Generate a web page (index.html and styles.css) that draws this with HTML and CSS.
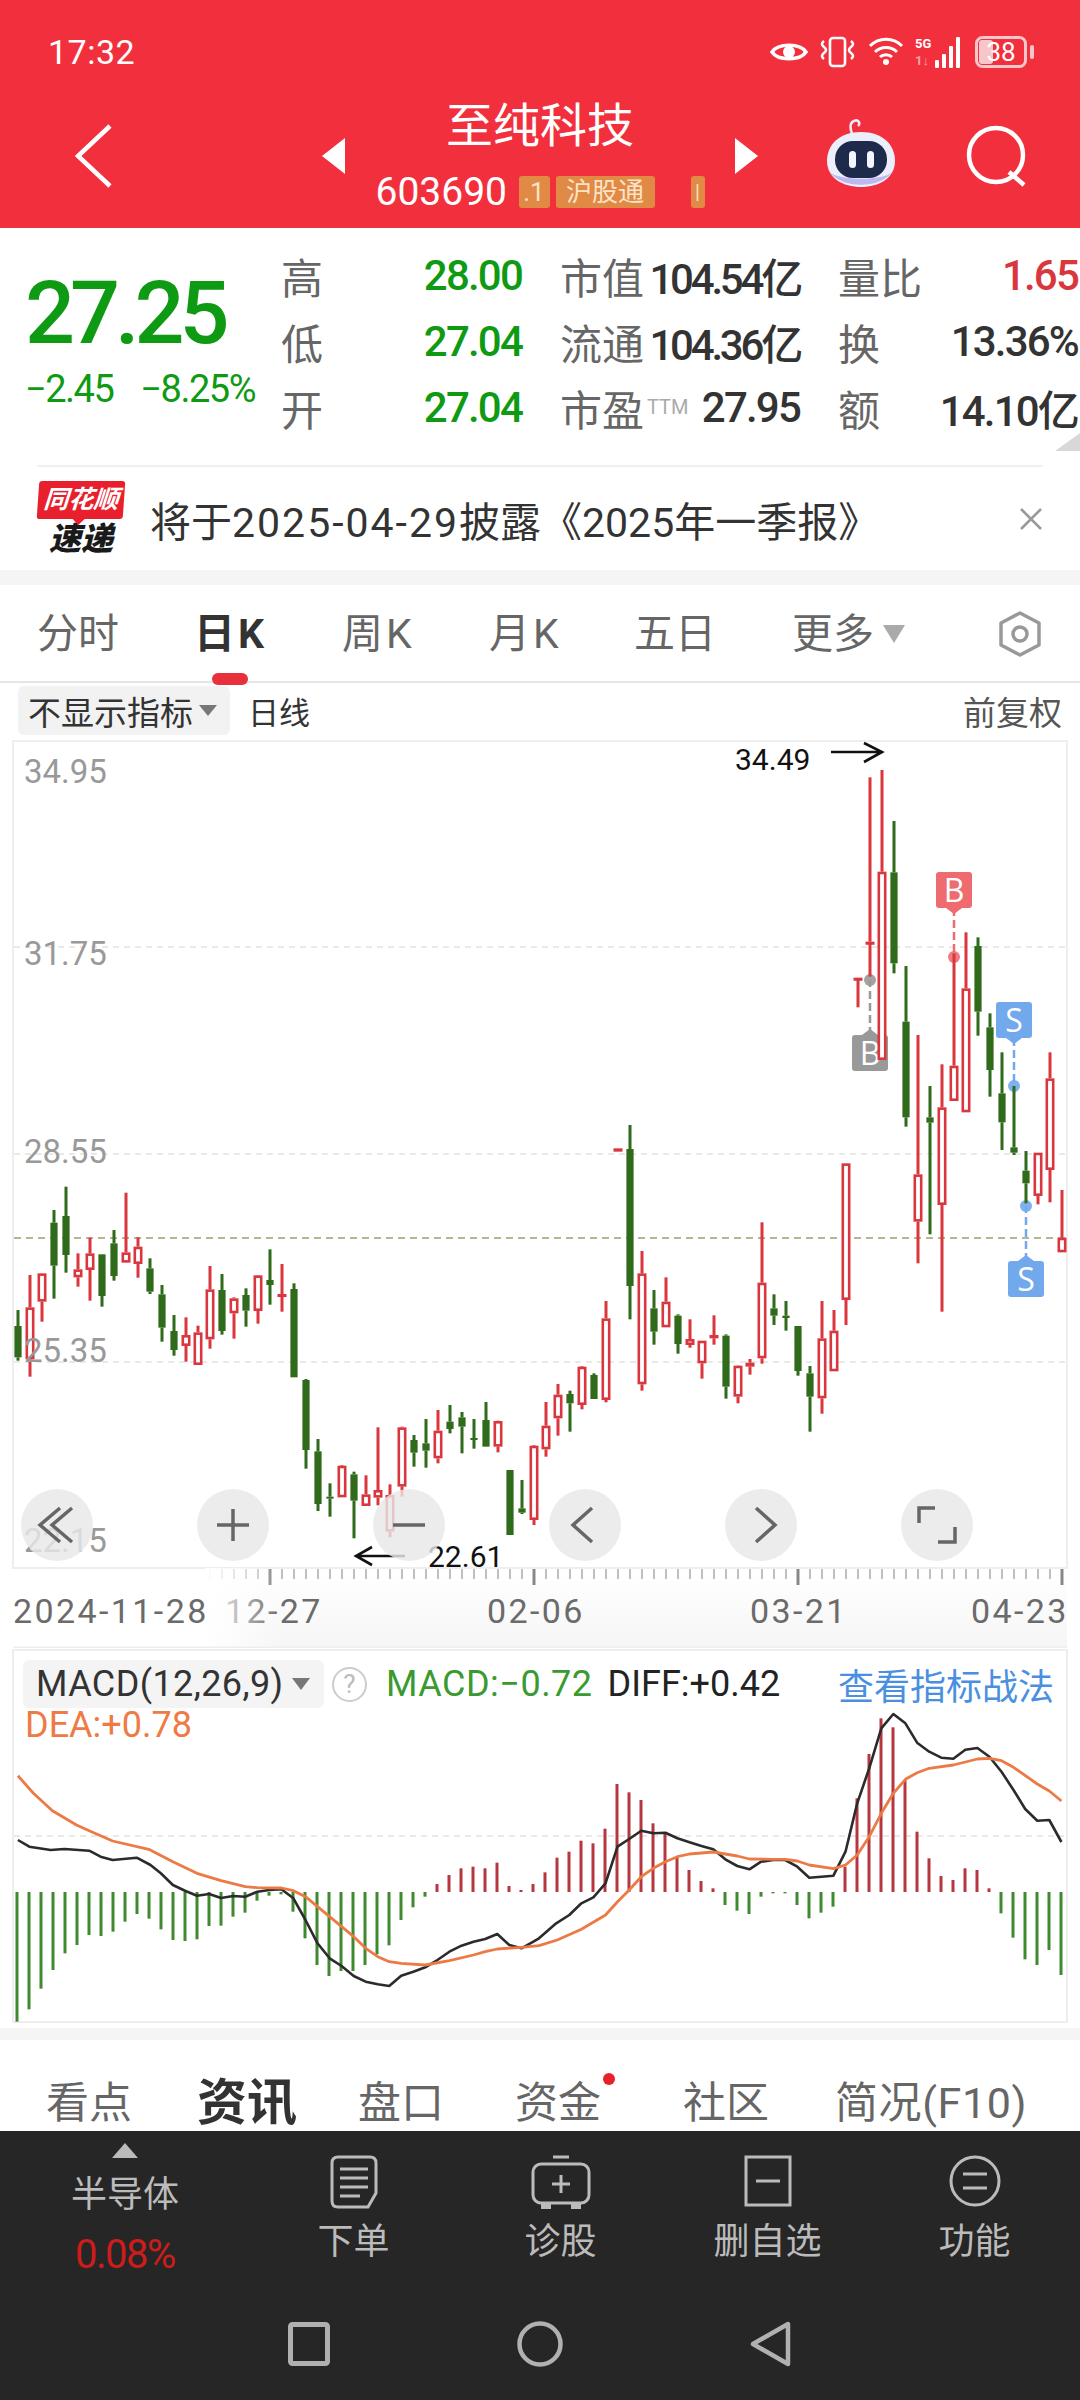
FILE: index.html
```html
<!DOCTYPE html>
<html lang="zh-CN">
<head>
    <meta charset="UTF-8">
    <meta name="viewport" content="width=device-width, initial-scale=1.0">
    <title>至纯科技</title>
    <link rel="stylesheet" href="styles.css">
</head>
<body>
    <header class="header">
        <div class="statusbar">
            <span class="time">17:32</span>
            <div class="status-icons">
                <svg width="38" height="24" viewBox="0 0 38 24"><path d="M2 12C8 3 30 3 36 12C30 21 8 21 2 12Z" fill="none" stroke="#fff" stroke-width="3.5"/><circle cx="19" cy="12" r="6" fill="#fff"/></svg>
                <svg width="39" height="32" viewBox="0 0 39 32"><rect x="12" y="2" width="15" height="28" rx="3" fill="none" stroke="#fff" stroke-width="2.6"/><path d="M6 5q-4 3 0 6t0 6t0 6M33 5q4 3 0 6t0 6t0 6" fill="none" stroke="#fff" stroke-width="2.6"/></svg>
                <svg width="38" height="32" viewBox="0 0 36 32"><path d="M2 10C11 1 25 1 34 10M7 16C13 10 23 10 29 16M12 21C15 18 21 18 24 21" fill="none" stroke="#fff" stroke-width="3"/><circle cx="18" cy="26" r="3" fill="#fff"/></svg>
                <svg width="50" height="32" viewBox="0 0 50 32"><text x="0" y="12" class="fiveg">5G</text><text x="0" y="29" class="fiveg fiveg-dim">1↓</text><g fill="#fff"><rect x="20" y="24" width="4" height="8" rx="1"/><rect x="27" y="18" width="4" height="14" rx="1"/><rect x="34" y="10" width="4" height="22" rx="1"/><rect x="41" y="1" width="4" height="31" rx="1"/></g></svg>
                <svg width="60" height="32" viewBox="0 0 60 32"><rect x="1.5" y="1.5" width="49" height="29" rx="6" fill="none" stroke="#f7c6ca" stroke-width="3"/><rect x="4" y="4" width="14" height="24" rx="3" fill="#f7c6ca"/><text x="26" y="25" class="battery-num">38</text><rect x="55" y="9" width="4" height="14" rx="2" fill="#f7c6ca"/></svg>
            </div>
        </div>
        <div class="titlebar">
            <svg class="back" width="38" height="64" viewBox="0 0 38 64"><path d="M35 2L3 32L35 62" fill="none" stroke="#fff" stroke-width="4.5"/></svg>
            <svg class="arrow-prev" width="23" height="36" viewBox="0 0 23 36"><path d="M0 18L23 0V36Z" fill="#fff"/></svg>
            <div class="title-block">
                <div class="stock-name">至纯科技</div>
                <div class="code-row">
                    <span class="stock-code">603690</span>
                    <span class="tag tag-short">.1</span>
                    <span class="tag">沪股通</span>
                    <span class="tag tag-cut">|</span>
                </div>
            </div>
            <svg class="arrow-next" width="23" height="36" viewBox="0 0 23 36"><path d="M23 18L0 0V36Z" fill="#fff"/></svg>
            <svg class="robot" width="72" height="70" viewBox="0 0 72 70">
                <path d="M28 18C25 11 24 5 29 3C33 1 36 5 33 8" fill="none" stroke="#e8e9fb" stroke-width="2.5"/>
                <path d="M36 14C58 14 70 27 70 43C70 60 54 69 36 69C18 69 2 60 2 43C2 27 14 14 36 14Z" fill="#eceefb"/>
                <path d="M5 54C16 71 56 71 67 54C60 63 12 63 5 54Z" fill="#bcb8f0"/>
                <rect x="10" y="23" width="52" height="37" rx="18" fill="#1e2a4c"/>
                <rect x="24" y="33" width="7" height="17" rx="3.5" fill="#f4f5ff"/>
                <rect x="42" y="33" width="7" height="17" rx="3.5" fill="#f4f5ff"/>
            </svg>
            <svg class="search" width="62" height="62" viewBox="0 0 62 62"><circle cx="30" cy="30" r="27" fill="none" stroke="#fff" stroke-width="4.5"/><path d="M43 47L58 60" stroke="#fff" stroke-width="4.5"/></svg>
        </div>
    </header>

    <section class="quote">
        <div class="quote-top">
            <div class="price-block">
                <div class="price">27.25</div>
                <div class="change"><span>−2.45</span><span>−8.25%</span></div>
            </div>
            <div class="stats">
                <div class="stat"><span class="stat-label">高</span><span class="val-big green">28.00</span></div>
                <div class="stat"><span class="stat-label">市值</span><span class="val-big val-tight">104.54亿</span></div>
                <div class="stat"><span class="stat-label">量比</span><span class="val-big red">1.65</span></div>
                <div class="stat"><span class="stat-label">低</span><span class="val-big green">27.04</span></div>
                <div class="stat"><span class="stat-label">流通</span><span class="val-big val-tight">104.36亿</span></div>
                <div class="stat"><span class="stat-label">换</span><span class="val-big">13.36%</span></div>
                <div class="stat"><span class="stat-label">开</span><span class="val-big green">27.04</span></div>
                <div class="stat"><span class="stat-label">市盈<sup class="ttm">TTM</sup></span><span class="val-big">27.95</span></div>
                <div class="stat"><span class="stat-label">额</span><span class="val-big">14.10亿</span></div>
            </div>
        </div>
        <span class="corner"></span>
        <div class="divider"></div>
        <div class="notice">
            <div class="logo">
                <div class="logo-top">同花顺</div>
                <div class="logo-bottom">速递</div>
            </div>
            <div class="notice-text">将于<span class="notice-date">2025-04-29</span>披露《2025年一季报》</div>
            <svg class="notice-close" width="24" height="24" viewBox="0 0 24 24"><path d="M2 2L22 22M22 2L2 22" stroke="#999" stroke-width="2.5"/></svg>
        </div>
    </section>

    <div class="gap gap-top"></div>

    <nav class="period-tabs">
        <span>分时</span>
        <span class="period-k period-active">日K</span>
        <span class="period-k">周K</span>
        <span class="period-k">月K</span>
        <span>五日</span>
        <span class="period-more">更多<i class="tri tri-more"></i></span>
        <svg class="hex" width="46" height="46" viewBox="0 0 46 46"><path d="M23 2L42 12V34L23 44L4 34V12Z" fill="none" stroke="#999" stroke-width="3.5" stroke-linejoin="round"/><circle cx="23" cy="23" r="7" fill="none" stroke="#999" stroke-width="3.5"/></svg>
    </nav>

    <div class="indicator-row">
        <div class="chip">不显示指标<i class="tri tri-chip"></i></div>
        <span class="cycle">日线</span>
        <span class="adjust">前复权</span>
    </div>

    <section class="kline">
        <svg id="klineChart" class="chart-svg" width="1080" height="908" viewBox="0 740 1080 908"></svg>
        <div class="chart-buttons">
            <div class="round-btn"><svg width="72" height="72" viewBox="0 0 72 72"><path d="M39 19L19 36L39 53M51 19L31 36L51 53" class="btn-stroke"/></svg></div>
            <div class="round-btn"><svg width="72" height="72" viewBox="0 0 72 72"><path d="M20 36H52M36 20V52" class="btn-stroke"/></svg></div>
            <div class="round-btn"><svg width="72" height="72" viewBox="0 0 72 72"><path d="M20 36H52" class="btn-stroke"/></svg></div>
            <div class="round-btn"><svg width="72" height="72" viewBox="0 0 72 72"><path d="M43 19L24 36L43 53" class="btn-stroke"/></svg></div>
            <div class="round-btn"><svg width="72" height="72" viewBox="0 0 72 72"><path d="M31 19L50 36L31 53" class="btn-stroke"/></svg></div>
            <div class="round-btn"><svg width="72" height="72" viewBox="0 0 72 72"><path d="M18 34V19H34M54 38V53H37" class="btn-stroke"/></svg></div>
        </div>
    </section>

    <section class="macd">
        <div class="macd-box">
            <svg id="macdChart" class="macd-svg" width="1056" height="374" viewBox="13 1649 1056 374"></svg>
            <div class="macd-head">
                <div class="macd-chip">MACD(12,26,9)<i class="tri tri-macd"></i></div>
                <span class="help">?</span>
                <span class="macd-val">MACD:−0.72</span>
                <span class="diff-val">DIFF:+0.42</span>
                <span class="macd-link">查看指标战法</span>
            </div>
            <div class="dea-val">DEA:+0.78</div>
        </div>
    </section>

    <div class="gap gap-bottom"></div>

    <nav class="info-tabs">
        <span>看点</span>
        <span class="info-active">资讯</span>
        <span>盘口</span>
        <span class="info-dot">资金</span>
        <span>社区</span>
        <span class="info-last">简况(F10)</span>
    </nav>

    <footer class="bottom">
        <div class="menu">
            <div class="menu-sector">
                <i class="tri-up"></i>
                <span class="sector-name">半导体</span>
                <span class="sector-pct">0.08%</span>
            </div>
            <div class="menu-item">
                <svg width="48" height="54" viewBox="0 0 48 54"><path d="M8 2H40Q46 2 46 8V38L38 52H8Q2 52 2 46V8Q2 2 8 2Z" class="menu-stroke"/><path d="M10 14H38M10 23H38M10 32H38M10 41H30" class="menu-stroke"/></svg>
                <span>下单</span>
            </div>
            <div class="menu-item">
                <svg width="60" height="54" viewBox="0 0 60 54"><path d="M22 2H38" class="menu-stroke"/><rect x="2" y="9" width="56" height="39" rx="8" class="menu-stroke"/><path d="M30 20V38M21 29H39" class="menu-stroke"/><path d="M10 49H20V54H10ZM40 49H50V54H40Z" fill="#bbb"/></svg>
                <span>诊股</span>
            </div>
            <div class="menu-item">
                <svg width="48" height="54" viewBox="0 0 48 54"><rect x="2" y="2" width="44" height="48" class="menu-stroke"/><path d="M12 26H36" class="menu-stroke"/></svg>
                <span>删自选</span>
            </div>
            <div class="menu-item">
                <svg width="52" height="54" viewBox="0 0 52 54"><circle cx="26" cy="26" r="24" class="menu-stroke"/><path d="M14 19H38M14 33H38" class="menu-stroke"/></svg>
                <span>功能</span>
            </div>
        </div>
        <div class="navbar">
            <svg width="42" height="44" viewBox="0 0 42 44"><rect x="2.5" y="2.5" width="37" height="39" rx="2" fill="none" stroke="#b0b0b0" stroke-width="5"/></svg>
            <svg width="46" height="46" viewBox="0 0 46 46"><circle cx="23" cy="23" r="20.5" fill="none" stroke="#b0b0b0" stroke-width="4.5"/></svg>
            <svg width="42" height="46" viewBox="0 0 42 46"><path d="M38 3V43L3 23Z" fill="none" stroke="#b0b0b0" stroke-width="4.5" stroke-linejoin="round"/></svg>
        </div>
    </footer>

    <script src="chart.js"></script>
</body>
</html>
```
FILE: styles.css
```css
:root {
    --header-red: #f2303d;
    --green: #0f9a14;
    --red: #d9363e;
    --text-dark: #333;
    --text-gray: #666;
    --line: #eee;
    --gap-bg: #f5f5f5;
}

* {
    box-sizing: border-box;
}

body {
    margin: 0;
    width: 1080px;
    height: 2400px;
    overflow: hidden;
    background-color: #fff;
    font-family: Roboto, "Noto Sans CJK SC", sans-serif;
    color: var(--text-dark);
}

/* header */
.header {
    height: 228px;
    background-color: var(--header-red);
    color: #fff;
}

.statusbar {
    height: 84px;
    padding: 20px 45px 0 48px;
    display: flex;
    align-items: center;
    justify-content: space-between;
}

.time {
    font-size: 34px;
    letter-spacing: 0.5px;
}

.status-icons {
    display: flex;
    align-items: center;
    gap: 10px;
}

.fiveg {
    font: bold 13px Roboto, sans-serif;
    fill: #fff;
}

.fiveg-dim {
    fill: #f8a0a6;
}

.battery-num {
    font: 26px Roboto, sans-serif;
    fill: #fff;
    text-anchor: middle;
}

.titlebar {
    height: 144px;
    display: flex;
    align-items: center;
}

.back {
    margin-left: 75px;
    flex: none;
}

.arrow-prev {
    margin-left: 209px;
    flex: none;
}

.title-block {
    width: 390px;
    display: flex;
    flex-direction: column;
    align-items: center;
    gap: 20px;
}

.stock-name {
    font-size: 47px;
    line-height: 52px;
}

.code-row {
    width: 329px;
    height: 40px;
    display: flex;
    align-items: center;
    white-space: nowrap;
}

.stock-code {
    font-size: 39px;
    width: 143px;
    flex: none;
}

.tag {
    background-color: #e08a45;
    color: #fbe3c8;
    font-size: 26px;
    line-height: 32px;
    height: 32px;
    width: 99px;
    flex: none;
    text-align: center;
    border-radius: 3px;
}

.tag-short {
    width: 31px;
    margin-right: 6px;
}

.tag-cut {
    width: 14px;
    margin-left: 36px;
    font-size: 20px;
}

.arrow-next {
    flex: none;
}

.robot {
    margin-left: 67px;
    margin-top: -6px;
    flex: none;
}

.search {
    margin-left: 69px;
    flex: none;
}

/* quote block */
.quote {
    position: relative;
    height: 342px;
}

.quote-top {
    height: 237px;
    display: flex;
}

.price-block {
    width: 281px;
    flex: none;
    padding: 40px 0 0 25px;
}

.price {
    font-size: 88px;
    line-height: 90px;
    font-weight: 500;
    letter-spacing: -5px;
    color: var(--green);
}

.change {
    margin-top: 11px;
    display: flex;
    gap: 27px;
    font-size: 38px;
    line-height: 40px;
    letter-spacing: -1.5px;
    color: var(--green);
}

.stats {
    width: 799px;
    padding-top: 14px;
    display: grid;
    grid-template-columns: 241px 240px 240px;
    grid-auto-rows: 66px;
    column-gap: 38px;
}

.stat {
    display: flex;
    justify-content: space-between;
    align-items: center;
    white-space: nowrap;
}

.stat-label {
    font-size: 42px;
    color: var(--text-gray);
}

.val-big {
    font-size: 42px;
    font-weight: 500;
    letter-spacing: -1.8px;
    color: var(--text-dark);
}

.val-tight {
    letter-spacing: -3.2px;
}

.green {
    color: var(--green);
}

.red {
    color: var(--red);
}

.ttm {
    font-size: 20px;
    color: #aaa;
    vertical-align: 12px;
    line-height: 0;
    margin-left: 3px;
}

.corner {
    position: absolute;
    right: 0;
    top: 205px;
    border-left: 25px solid transparent;
    border-bottom: 18px solid #d8d8d8;
}

.divider {
    height: 2px;
    margin: 0 37px;
    background-color: #f0f0f0;
}

.notice {
    height: 103px;
    padding: 0 37px;
    display: flex;
    align-items: center;
}

.logo {
    width: 88px;
    flex: none;
    display: flex;
    flex-direction: column;
    align-items: center;
}

.logo-top {
    position: relative;
    width: 86px;
    height: 38px;
    background-color: #e8202e;
    color: #fff;
    font-size: 25px;
    line-height: 38px;
    font-weight: bold;
    font-style: italic;
    text-align: center;
    border-radius: 3px;
    transform: skewX(-4deg);
    white-space: nowrap;
}

.logo-top::after {
    content: "";
    position: absolute;
    left: 36px;
    top: 38px;
    border-left: 6px solid transparent;
    border-right: 6px solid transparent;
    border-top: 6px solid #e8202e;
}

.logo-bottom {
    margin-top: 3px;
    font-size: 32px;
    line-height: 34px;
    font-weight: 900;
    font-style: italic;
    color: #1a1a1a;
}

.notice-text {
    margin-left: 25px;
    font-size: 41px;
    color: var(--text-dark);
    white-space: nowrap;
}

.notice-date {
    letter-spacing: 2px;
}

.notice-close {
    margin-left: auto;
}

.gap {
    background-color: var(--gap-bg);
}

.gap-top {
    height: 15px;
}

.gap-bottom {
    height: 12px;
}

/* period tabs */
.period-tabs {
    height: 98px;
    padding: 2px 37px 0 37px;
    display: grid;
    grid-template-columns: 157px 148px 147px 145px 158px 1fr auto;
    align-items: center;
    font-size: 41px;
    line-height: 50px;
    color: var(--text-gray);
    border-bottom: 2px solid #e5e5e5;
}

.period-k {
    letter-spacing: 3px;
}

.period-active {
    position: relative;
    font-weight: bold;
    color: var(--text-dark);
}

.period-active::after {
    content: "";
    position: absolute;
    left: 18px;
    top: 64px;
    width: 36px;
    height: 12px;
    border-radius: 6px;
    background-color: #e8303a;
}

.period-more {
    display: flex;
    align-items: center;
}

.hex {
    flex: none;
}

.tri {
    display: inline-block;
    width: 0;
    height: 0;
    border-left: 10px solid transparent;
    border-right: 10px solid transparent;
    border-top: 14px solid #aaa;
}

.tri-more {
    margin-left: 9px;
    border-left-width: 11px;
    border-right-width: 11px;
    border-top-width: 18px;
}

.tri-chip {
    margin-left: 6px;
    border-left-width: 9px;
    border-right-width: 9px;
    border-top: 11px solid #777;
}

.tri-macd {
    margin-left: 9px;
    border-left-width: 9px;
    border-right-width: 9px;
    border-top: 12px solid #777;
}

/* indicator row */
.indicator-row {
    height: 57px;
    padding: 3px 18px 5px;
    display: flex;
    align-items: center;
}

.chip {
    width: 212px;
    height: 49px;
    padding-left: 10px;
    display: flex;
    align-items: center;
    background-color: #f2f2f2;
    border-radius: 6px;
    font-size: 33px;
    white-space: nowrap;
}

.cycle {
    margin-left: 18px;
    font-size: 31px;
}

.adjust {
    margin-left: auto;
    font-size: 33px;
    color: #555;
}

/* charts */
.kline {
    position: relative;
    height: 908px;
}

.chart-svg {
    display: block;
}

.chart-buttons {
    position: absolute;
    left: 21px;
    top: 749px;
    width: 952px;
    display: flex;
    justify-content: space-between;
}

.round-btn {
    width: 72px;
    height: 72px;
    border-radius: 50%;
    background-color: rgba(232, 232, 232, 0.82);
}

.round-btn svg {
    display: block;
}

.btn-stroke {
    fill: none;
    stroke: #666;
    stroke-width: 3.5;
}

.y-label {
    font: 33px Roboto, sans-serif;
    fill: #999;
}

.mark-label {
    font: 30px Roboto, sans-serif;
    fill: #111;
}

.date-label {
    font: 34px Roboto, sans-serif;
    fill: #6b6b6b;
    letter-spacing: 2.4px;
}

.tag-letter {
    font: 32px "Open Sans", sans-serif;
    fill: #fff;
    text-anchor: middle;
}

.macd {
    height: 380px;
    padding: 1px 12px 0 12px;
}

.macd-box {
    position: relative;
    height: 374px;
    border: 2px solid var(--line);
}

.macd-svg {
    position: absolute;
    left: -2px;
    top: -2px;
}

.macd-head {
    position: relative;
    padding: 9px 12px 0 9px;
    display: flex;
    align-items: center;
    height: 57px;
    font-size: 36px;
    white-space: nowrap;
}

.macd-chip {
    width: 301px;
    height: 48px;
    padding-left: 13px;
    display: flex;
    align-items: center;
    background-color: #f4f4f4;
    border-radius: 6px;
    letter-spacing: 0.4px;
}

.help {
    margin-left: 8px;
    width: 35px;
    height: 35px;
    flex: none;
    border: 2.5px solid #ccc;
    border-radius: 50%;
    text-align: center;
    color: #bbb;
    font-size: 26px;
    line-height: 30px;
}

.macd-val {
    margin-left: 19px;
    letter-spacing: 0.5px;
    color: #3a9a30;
}

.diff-val {
    margin-left: 15px;
    color: #222;
}

.macd-link {
    margin-left: auto;
    color: #4a8fe0;
}

.dea-val {
    position: relative;
    padding-left: 11px;
    font-size: 36px;
    line-height: 34px;
    color: #ee7b45;
}

/* news tabs */
.info-tabs {
    height: 91px;
    padding-left: 46px;
    display: grid;
    grid-template-columns: 151px 161px 157px 168px 152px auto;
    align-items: end;
    font-size: 43px;
    line-height: 56px;
    color: var(--text-gray);
    overflow: hidden;
}

.info-active {
    font-size: 50px;
    font-weight: bold;
    color: var(--text-dark);
}

.info-dot {
    position: relative;
}

.info-dot::after {
    content: "";
    position: absolute;
    left: 88px;
    top: -2px;
    width: 12px;
    height: 12px;
    border-radius: 50%;
    background-color: #e6212b;
}

.info-last {
    letter-spacing: 0.6px;
    white-space: nowrap;
}

/* bottom bar */
.bottom {
    height: 269px;
    background-color: #262626;
    color: #bbb;
}

.menu {
    height: 170px;
    display: grid;
    grid-template-columns: 250px repeat(4, 207px);
}

.menu-sector {
    padding-top: 12px;
    display: flex;
    flex-direction: column;
    align-items: center;
}

.tri-up {
    width: 0;
    height: 0;
    border-left: 13px solid transparent;
    border-right: 13px solid transparent;
    border-bottom: 15px solid #bbb;
}

.sector-name {
    margin-top: 16px;
    font-size: 36px;
    line-height: 42px;
}

.sector-pct {
    margin-top: 17px;
    font-size: 40px;
    line-height: 44px;
    letter-spacing: -1.5px;
    color: #cc1c1c;
}

.menu-item {
    padding-top: 24px;
    display: flex;
    flex-direction: column;
    align-items: center;
    font-size: 36px;
    line-height: 40px;
}

.menu-item span {
    margin-top: 13px;
}

.menu-stroke {
    fill: none;
    stroke: #bbb;
    stroke-width: 3;
}

.navbar {
    padding-top: 20px;
    display: flex;
    justify-content: center;
    align-items: center;
    gap: 187px;
}
```
FILE: chart.js
```js
// readings were taken from 3x crops, so y = base + v / 3
const SVG_NS = 'http://www.w3.org/2000/svg';
const CANDLE_RED = '#d9363e';
const CANDLE_GREEN = '#2f6b1a';

// [up, wick top, body top, body bottom, wick bottom]
const candles = [
    [0, 330, 378, 472, 482], [1, 225, 322, 478, 530], [1, 220, 220, 305, 365], [0, 30, 68, 197, 296],
    [0, -40, 48, 165, 218], [1, 160, 208, 232, 260], [1, 113, 160, 210, 302], [0, 163, 163, 288, 320],
    [0, 90, 130, 228, 242], [1, -22, 157, 188, 188], [1, 112, 140, 192, 233], [0, 175, 205, 275, 282],
    [0, 255, 283, 383, 425], [0, 345, 393, 450, 467], [1, 352, 405, 438, 485], [1, 377, 397, 495, 495],
    [1, 198, 268, 418, 446], [0, 222, 270, 393, 404], [1, 292, 295, 340, 416], [0, 265, 285, 332, 380],
    [1, 225, 226, 333, 371], [0, 148, 240, 255, 314], [1, 192, 282, 290, 335], [0, 250, 267, 532, 532],
    [0, 537, 540, 750, 806], [0, 717, 754, 912, 933], [0, 850, 890, 896, 950], [1, 795, 797, 892, 892],
    [0, 815, 823, 902, 1015], [1, 826, 883, 918, 918], [1, 682, 870, 893, 916], [1, 853, 885, 995, 1012],
    [1, 680, 682, 860, 890], [0, 705, 720, 758, 800], [0, 657, 730, 752, 803], [1, 630, 692, 775, 790],
    [0, 615, 665, 687, 700], [0, 636, 652, 680, 760], [0, 657, 714, 719, 746], [0, 606, 660, 740, 740],
    [1, 662, 663, 740, 757], [0, 810, 810, 1005, 1005], [0, 840, 925, 938, 942], [1, 735, 737, 960, 975],
    [1, 606, 677, 748, 770], [1, 552, 584, 655, 707], [0, 572, 582, 610, 695], [1, 498, 500, 615, 628],
    [0, 520, 525, 597, 597], [1, 303, 355, 600, 607], [1, -155, -155, -145, -145], [0, -225, -153, 258, 358],
    [1, 153, 220, 553, 572], [0, 270, 325, 395, 434], [1, 232, 305, 382, 382], [0, 343, 347, 432, 461],
    [1, 358, 417, 435, 443], [1, 422, 422, 490, 536], [1, 346, 405, 415, 434], [0, 403, 407, 560, 596],
    [1, 496, 497, 590, 610], [1, 477, 488, 500, 524], [1, 67, 248, 475, 491], [0, 283, 325, 347, 375],
    [0, 303, 347, 354, 392], [0, 378, 378, 513, 527], [0, 498, 520, 590, 695], [1, 303, 415, 595, 641],
    [1, 330, 392, 514, 514], [1, -110, -110, 300, 375], [1, -667, -667, -662, -578], [1, -1268, -775, -768, -670],
    [1, -1290, -985, -420, -420], [0, -1137, -983, -710, -680], [0, -702, -535, -248, -220], [1, -495, -77, 65, 190],
    [0, -342, -248, -232, 103], [1, -407, -278, 15, 335], [1, -740, -403, -297, -297], [1, -803, -635, -263, -263],
    [0, -788, -762, -565, -493], [0, -560, -518, -390, -310], [0, -443, -320, -233, -150], [0, -342, -158, -142, -135],
    [0, -147, -88, -50, 10], [1, -142, -142, -12, 13], [1, -443, -365, -90, 7], [1, -30, 113, 157, 157]
];

// histogram bar ends, zero line sits at 757
const bars = [
    1145, 1108, 1046, 990, 940, 915, 885, 888, 875, 845, 822, 836, 868, 900, 903, 898, 858, 857, 830, 818,
    782, 767, 763, 815, 895, 975, 1008, 993, 993, 975, 943, 916, 840, 802, 770, 732, 705, 685, 680, 685,
    668, 738, 750, 732, 697, 653, 635, 602, 610, 566, 432, 457, 480, 550, 580, 652, 690, 723, 745, 795,
    812, 822, 770, 760, 760, 795, 835, 818, 800, 680, 475, 342, 235, 262, 420, 575, 655, 708, 720, 685,
    690, 745, 820, 893, 958, 975, 930, 1005
];

// x in the left crop, then the right crop shifted by 1568
const diffLine = [
    [55, 600], [88, 620], [150, 630], [190, 627], [262, 632], [295, 650], [330, 660], [400, 653], [440, 675],
    [470, 700], [505, 735], [540, 752], [575, 767], [610, 762], [645, 774], [680, 768], [715, 770], [750, 755],
    [785, 750], [820, 748], [855, 775], [890, 840], [925, 910], [960, 955], [995, 978], [1030, 1008], [1065, 1025],
    [1100, 1033], [1133, 1038], [1168, 1007], [1203, 995], [1238, 982], [1273, 960], [1308, 935], [1343, 917],
    [1378, 905], [1412, 897], [1447, 882], [1482, 915], [1517, 925], [1552, 905], [1568, 895], [1618, 850],
    [1656, 825], [1691, 790], [1726, 772], [1761, 730], [1796, 620], [1830, 597], [1865, 572], [1900, 580],
    [1935, 578], [1970, 595], [2005, 607], [2040, 618], [2074, 628], [2109, 658], [2144, 678], [2179, 688],
    [2213, 665], [2248, 660], [2283, 660], [2318, 680], [2353, 713], [2388, 710], [2423, 707], [2458, 635],
    [2492, 490], [2527, 385], [2562, 265], [2597, 222], [2632, 250], [2666, 308], [2701, 335], [2736, 353],
    [2771, 356], [2806, 329], [2841, 324], [2876, 350], [2911, 395], [2946, 450], [2980, 507], [3015, 542],
    [3050, 540], [3085, 606]
];

const deaLine = [
    [55, 407], [100, 460], [155, 512], [225, 555], [262, 572], [330, 603], [435, 628], [505, 665], [575, 700],
    [645, 722], [715, 740], [750, 743], [820, 744], [855, 752], [890, 770], [925, 800], [960, 830], [1030, 890],
    [1065, 925], [1100, 950], [1133, 965], [1168, 970], [1238, 975], [1308, 962], [1378, 945], [1412, 935],
    [1447, 927], [1517, 922], [1568, 917], [1621, 900], [1691, 868], [1761, 825], [1796, 785], [1830, 750],
    [1865, 710], [1900, 685], [1935, 665], [1970, 650], [2005, 642], [2074, 636], [2144, 648], [2179, 657],
    [2248, 658], [2283, 658], [2318, 663], [2353, 675], [2423, 686], [2458, 675], [2492, 645], [2527, 590],
    [2562, 520], [2597, 460], [2632, 418], [2666, 398], [2701, 385], [2771, 375], [2841, 357], [2876, 355],
    [2911, 362], [2946, 382], [3015, 432], [3050, 453], [3085, 483]
];

function el(parent, name, attrs, text) {
    const node = document.createElementNS(SVG_NS, name);
    for (const key in attrs) {
        node.setAttribute(key, attrs[key]);
    }
    if (text) {
        node.textContent = text;
    }
    parent.appendChild(node);
    return node;
}

function candleX(i) {
    return 18 + 12 * i;
}

function kY(v) {
    return 1200 + v / 3;
}

function drawGrid(svg) {
    const defs = el(svg, 'defs', {});
    const band = el(defs, 'linearGradient', { id: 'axisBand', x1: 0, y1: 0, x2: 0, y2: 1 });
    el(band, 'stop', { offset: '0', 'stop-color': '#fff' });
    el(band, 'stop', { offset: '1', 'stop-color': '#f6f6f6' });
    const fade = el(defs, 'linearGradient', { id: 'axisFade', x1: 0, y1: 0, x2: 1, y2: 0 });
    el(fade, 'stop', { offset: '0', 'stop-color': '#fff', 'stop-opacity': '1' });
    el(fade, 'stop', { offset: '1', 'stop-color': '#fff', 'stop-opacity': '0' });

    el(svg, 'rect', { x: 205, y: 1570, width: 862, height: 78, fill: 'url(#axisBand)' });
    el(svg, 'rect', { x: 13, y: 741, width: 1054, height: 827, fill: 'none', stroke: '#eee', 'stroke-width': 2 });

    [947, 1154, 1362].forEach(function (y) {
        el(svg, 'line', { x1: 14, y1: y, x2: 1066, y2: y, stroke: '#e2e2e2', 'stroke-width': 1.5, 'stroke-dasharray': '6 5' });
    });
    el(svg, 'line', { x1: 14, y1: 1238, x2: 1066, y2: 1238, stroke: '#b8b690', 'stroke-width': 2, 'stroke-dasharray': '7 5' });
}

function drawAxis(svg) {
    for (let i = 16; i < 88; i++) {
        const major = (i - 21) % 22 === 0;
        el(svg, 'rect', {
            x: candleX(i) - (major ? 1.5 : 0.75),
            y: 1569,
            width: major ? 3 : 1.5,
            height: major ? 16 : 10,
            fill: major ? '#888' : '#aaa'
        });
    }
    el(svg, 'text', { x: 225, y: 1623, class: 'date-label' }, '12-27');
    el(svg, 'rect', { x: 205, y: 1568, width: 75, height: 80, fill: 'url(#axisFade)' });
    el(svg, 'line', { x1: 13, y1: 1647.5, x2: 1067, y2: 1647.5, stroke: '#eee', 'stroke-width': 2 });
    el(svg, 'text', { x: 13, y: 1623, class: 'date-label' }, '2024-11-28');
    el(svg, 'text', { x: 487, y: 1623, class: 'date-label' }, '02-06');
    el(svg, 'text', { x: 750, y: 1623, class: 'date-label' }, '03-21');
    el(svg, 'text', { x: 971, y: 1623, class: 'date-label' }, '04-23');
}

function drawTag(svg, letter, x, y, color, dotY) {
    // x, y is the tag's top-left corner; the stem runs to the dot on the candle
    const down = dotY > y;
    const stemFrom = down ? y + 36 : y;
    el(svg, 'line', { x1: x + 18, y1: stemFrom, x2: x + 18, y2: dotY, stroke: color, 'stroke-width': 2.5, 'stroke-dasharray': '8 4' });
    el(svg, 'circle', { cx: x + 18, cy: dotY, r: 6, fill: color, opacity: 0.9 });
    el(svg, 'rect', { x: x, y: y, width: 36, height: 36, rx: 3, fill: color });
    const notch = down ? y + 36 : y;
    const tip = down ? notch + 6 : notch - 6;
    el(svg, 'path', { d: 'M' + (x + 10) + ' ' + notch + 'L' + (x + 18) + ' ' + tip + 'L' + (x + 26) + ' ' + notch + 'Z', fill: color });
    el(svg, 'text', { x: x + 18, y: y + 30, class: 'tag-letter' }, letter);
}

function drawCandles(svg) {
    candles.forEach(function (c, i) {
        const x = candleX(i);
        const color = c[0] ? CANDLE_RED : CANDLE_GREEN;
        const wickTop = kY(c[1]);
        const bodyTop = kY(c[2]);
        const bodyBottom = kY(c[3]);
        const wickBottom = kY(c[4]);
        if (bodyTop > wickTop) {
            el(svg, 'rect', { x: x - 1.5, y: wickTop, width: 3, height: bodyTop - wickTop, fill: color });
        }
        if (wickBottom > bodyBottom) {
            el(svg, 'rect', { x: x - 1.5, y: bodyBottom, width: 3, height: wickBottom - bodyBottom, fill: color });
        }
        if (c[0]) {
            el(svg, 'rect', {
                x: x - 3.2,
                y: bodyTop + 1.3,
                width: 6.4,
                height: Math.max(bodyBottom - bodyTop - 2.6, 0.5),
                fill: '#fff',
                stroke: color,
                'stroke-width': 2.6
            });
        } else {
            el(svg, 'rect', { x: x - 3.6, y: bodyTop, width: 7.2, height: Math.max(bodyBottom - bodyTop, 2), fill: color });
        }
    });
}

function drawKline(svg) {
    drawGrid(svg);
    drawTag(svg, 'B', 852, 1035, '#999', 980);
    drawTag(svg, 'B', 936, 872, '#ee6b70', 957);
    drawTag(svg, 'S', 996, 1002, '#72a9ec', 1086);
    drawTag(svg, 'S', 1008, 1261, '#72a9ec', 1206);
    drawCandles(svg);

    el(svg, 'text', { x: 24, y: 783, class: 'y-label' }, '34.95');
    el(svg, 'text', { x: 24, y: 965, class: 'y-label' }, '31.75');
    el(svg, 'text', { x: 24, y: 1163, class: 'y-label' }, '28.55');
    el(svg, 'text', { x: 24, y: 1362, class: 'y-label' }, '25.35');
    el(svg, 'text', { x: 24, y: 1552, class: 'y-label' }, '22.15');

    el(svg, 'text', { x: 735, y: 770, class: 'mark-label' }, '34.49');
    el(svg, 'path', { d: 'M831 752H882M864 743L882 752L864 762', fill: 'none', stroke: '#111', 'stroke-width': 2.6 });
    el(svg, 'text', { x: 428, y: 1567, class: 'mark-label' }, '22.61');
    el(svg, 'path', { d: 'M405 1556H356M372 1547L356 1556L372 1565', fill: 'none', stroke: '#111', 'stroke-width': 2.6 });

    drawAxis(svg);
}

function linePoints(points) {
    return points.map(function (p) {
        const x = p[0] < 1568 ? p[0] / 2.904 : 540 + (p[0] - 1568) / 2.904;
        return x.toFixed(1) + ',' + (1640 + p[1] / 3).toFixed(1);
    }).join(' ');
}

function drawMacd(svg) {
    el(svg, 'line', { x1: 15, y1: 1836, x2: 1065, y2: 1836, stroke: '#e2e2e2', 'stroke-width': 1.5, 'stroke-dasharray': '6 5' });
    bars.forEach(function (end, i) {
        const y = 1640 + end / 3;
        const up = end < 757;
        const top = up ? y : 1892;
        el(svg, 'rect', {
            x: candleX(i) - 1.5,
            y: top,
            width: 3,
            height: Math.abs(y - 1892),
            fill: up ? '#b6373d' : '#3f8a2e'
        });
    });
    el(svg, 'polyline', { points: linePoints(diffLine), fill: 'none', stroke: '#2b2b2b', 'stroke-width': 2.6, 'stroke-linejoin': 'round' });
    el(svg, 'polyline', { points: linePoints(deaLine), fill: 'none', stroke: '#ec7a45', 'stroke-width': 2.8, 'stroke-linejoin': 'round' });
}

drawKline(document.getElementById('klineChart'));
drawMacd(document.getElementById('macdChart'));
```
